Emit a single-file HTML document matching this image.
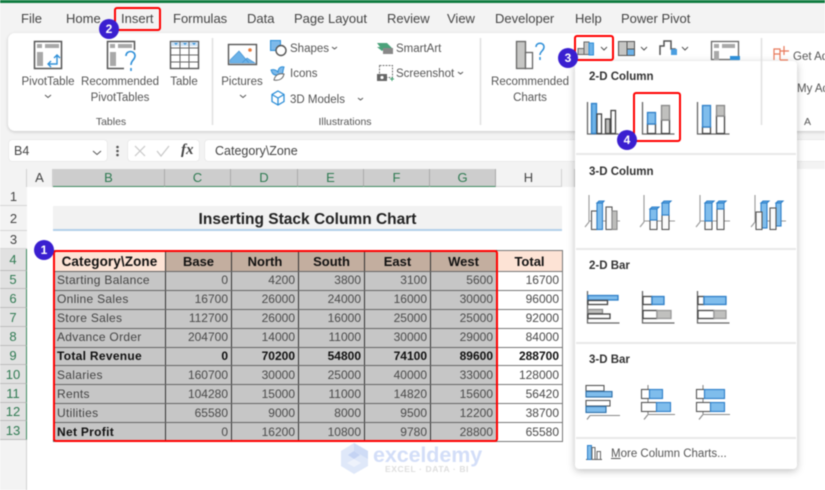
<!DOCTYPE html>
<html><head><meta charset="utf-8"><style>
*{box-sizing:border-box}
html,body{margin:0;padding:0;background:#fff}
#p{position:relative;width:825px;height:490px;overflow:hidden;background:#fff;font-family:"Liberation Sans",sans-serif;filter:blur(.4px)}
.a{position:absolute;white-space:nowrap}
.t{position:absolute;white-space:nowrap;font-size:12.5px;color:#444;line-height:14px}
.r{position:absolute;white-space:nowrap;font-size:11.5px;color:#555;line-height:14px}
.c{text-align:center;transform:translateX(-50%)}
.rh{position:absolute;left:0;width:27px;text-align:center;font-size:13px;color:#444;background:#f3f3f3;border-bottom:1px solid #d6d6d6;display:flex;align-items:center;justify-content:center}
.rh.s{background:#e1e1e1;color:#2f7a52;border-right:1.5px solid #3f8a60;border-bottom-color:#bdbdbd}
.ch{position:absolute;top:169px;height:18px;text-align:center;font-size:13px;line-height:18px;color:#444;background:#f3f3f3;border-right:1px solid #d0d0d0}
.ch.s{background:#cdcdcd;color:#2f7a52;border-bottom:1.5px solid #3f8a60;border-right-color:#aaa}
table{position:absolute;left:53px;top:250px;border-collapse:collapse;table-layout:fixed;width:509px;font-size:12px;color:#444}
td{padding:0 3px;height:18.9px;line-height:17px;text-align:right;background:#c6c6c6;border:1px solid #333;border-top-color:#666;border-bottom-color:#666;white-space:nowrap;overflow:hidden;color:#4a4a4a}
td.l{text-align:left;padding-left:3px;color:#444;letter-spacing:.3px}
tr.b td{font-weight:bold;color:#111}
tr.h td{height:21px;font-weight:bold;font-size:13px;text-align:center;background:#c3ae9f;color:#111}
tr.h td.p{background:#fde3d5}
tr.h td.k{font-size:13.5px;letter-spacing:.1px;padding:0}
td.w{background:#fff;border-color:#777}
.badge{position:absolute;width:20px;height:20px;border-radius:50%;background:#3a1fd0;color:#fff;font-size:12px;font-weight:bold;text-align:center;line-height:20px}
.red{position:absolute;border:2px solid #f00;border-radius:3px}
.dh{position:absolute;left:589px;font-size:11.5px;font-weight:bold;color:#333;line-height:14px;white-space:nowrap}
.dv{position:absolute;left:576px;width:220px;height:2px;background:#e8e8e8}
</style></head><body><div id="p">
<div class="a" style="left:0;top:0;width:825px;height:170px;background:#f3f3f3"></div>
<div class="a" style="left:0;top:0;width:825px;height:3px;background:#107c41"></div>

<div class="t" style="left:21px;top:12px;font-size:13px">File</div>
<div class="t" style="left:66px;top:12px;font-size:13px">Home</div>
<div class="t" style="left:121px;top:12px;font-size:13px">Insert</div>
<div class="t" style="left:173px;top:12px;font-size:13px">Formulas</div>
<div class="t" style="left:247px;top:12px;font-size:13px">Data</div>
<div class="t" style="left:294px;top:12px;font-size:13px">Page Layout</div>
<div class="t" style="left:387px;top:12px;font-size:13px">Review</div>
<div class="t" style="left:447px;top:12px;font-size:13px">View</div>
<div class="t" style="left:495px;top:12px;font-size:13px">Developer</div>
<div class="t" style="left:575px;top:12px;font-size:13px">Help</div>
<div class="t" style="left:621px;top:12px;font-size:13px">Power Pivot</div>

<div class="a" style="left:8px;top:33px;width:830px;height:98px;background:#fff;border-radius:7px;box-shadow:0 1px 3px rgba(0,0,0,.18)"></div>

<div class="r c" style="left:48px;top:75px">PivotTable</div>
<div class="r c" style="left:120px;top:75px">Recommended</div>
<div class="r c" style="left:120px;top:91px">PivotTables</div>
<div class="r c" style="left:184px;top:75px">Table</div>
<div class="r c" style="left:111px;top:115px;font-size:10.5px">Tables</div>
<div class="r c" style="left:242px;top:75px">Pictures</div>
<div class="r" style="left:290px;top:42px">Shapes</div>
<div class="r" style="left:290px;top:67px">Icons</div>
<div class="r" style="left:290px;top:93px">3D Models</div>
<div class="r" style="left:396px;top:42px">SmartArt</div>
<div class="r" style="left:396px;top:67px">Screenshot</div>
<div class="r c" style="left:345px;top:115px;font-size:10.5px">Illustrations</div>
<div class="r c" style="left:530px;top:75px">Recommended</div>
<div class="r c" style="left:530px;top:91px">Charts</div>
<div class="r" style="left:793px;top:50px">Get Add-ins</div>
<div class="r" style="left:797px;top:82px">My Add-ins</div>
<div class="r" style="left:804px;top:115px;font-size:10.5px">A</div>

<!-- formula bar -->
<div class="a" style="left:9px;top:140px;width:98px;height:21px;background:#fff;border-radius:3px;box-shadow:0 0 1px #bbb"></div>
<div class="t" style="left:14px;top:144px;font-size:12.5px">B4</div>
<div class="a" style="left:128px;top:140px;width:71px;height:21px;background:#fff;border-radius:3px;box-shadow:0 0 1px #bbb"></div>
<div class="a" style="left:181px;top:142px;font:italic bold 15px 'Liberation Serif',serif;color:#444">fx</div>
<div class="a" style="left:205px;top:140px;width:620px;height:21px;background:#fff;border-radius:3px 0 0 3px;box-shadow:0 0 1px #bbb"></div>
<div class="t" style="left:215px;top:144px;font-size:12.5px">Category\Zone</div>

<!-- sheet headers -->
<div class="a" style="left:0;top:165px;width:825px;height:325px;background:#fff"></div>
<div class="a" style="left:0;top:162px;width:825px;height:7px;background:#f3f3f3"></div>
<div class="a" style="left:0;top:169px;width:27px;height:18px;background:#f3f3f3;border-right:1px solid #d0d0d0"></div>
<div class="ch" style="left:27px;width:26px">A</div>
<div class="ch s" style="left:53px;width:112px">B</div>
<div class="ch s" style="left:165px;width:66px">C</div>
<div class="ch s" style="left:231px;width:67px">D</div>
<div class="ch s" style="left:298px;width:66px">E</div>
<div class="ch s" style="left:364px;width:66px">F</div>
<div class="ch s" style="left:430px;width:66px">G</div>
<div class="ch" style="left:496px;width:66px;border-bottom:1px solid #d6d6d6">H</div>
<div class="ch" style="left:562px;width:13px"></div>
<div class="a" style="left:0;top:187px;width:27px;height:303px;background:#f3f3f3;border-right:1px solid #d0d0d0"></div>

<div class="rh" style="top:187px;height:19px">1</div>
<div class="rh" style="top:206px;height:25px">2</div>
<div class="rh" style="top:231px;height:18px">3</div>
<div class="rh s" style="top:249px;height:22px">4</div>
<div class="rh s" style="top:271px;height:18px">5</div>
<div class="rh s" style="top:289px;height:19px">6</div>
<div class="rh s" style="top:308px;height:19px">7</div>
<div class="rh s" style="top:327px;height:19px">8</div>
<div class="rh s" style="top:346px;height:19px">9</div>
<div class="rh s" style="top:365px;height:19px">10</div>
<div class="rh s" style="top:384px;height:19px">11</div>
<div class="rh s" style="top:403px;height:18px">12</div>
<div class="rh s" style="top:421px;height:19px">13</div>

<div class="a" style="left:53px;top:206px;width:509px;height:25px;background:#f2f2f2;border-bottom:2px solid #b3d0ea;text-align:center;font-weight:bold;font-size:15.5px;line-height:27px;color:#222">Inserting Stack Column Chart</div>

<table>
<colgroup><col style="width:112px"><col style="width:66px"><col style="width:67px"><col style="width:66px"><col style="width:66px"><col style="width:66px"><col style="width:66px"></colgroup>
<tr class="h"><td class="p k">Category\Zone</td><td>Base</td><td>North</td><td>South</td><td>East</td><td>West</td><td class="p" style="border-color:#777">Total</td></tr>
<tr><td class="l">Starting Balance</td><td>0</td><td>4200</td><td>3800</td><td>3100</td><td>5600</td><td class="w">16700</td></tr>
<tr><td class="l">Online Sales</td><td>16700</td><td>26000</td><td>24000</td><td>16000</td><td>30000</td><td class="w">96000</td></tr>
<tr><td class="l">Store Sales</td><td>112700</td><td>26000</td><td>16000</td><td>25000</td><td>25000</td><td class="w">92000</td></tr>
<tr><td class="l">Advance Order</td><td>204700</td><td>14000</td><td>11000</td><td>30000</td><td>29000</td><td class="w">84000</td></tr>
<tr class="b"><td class="l">Total Revenue</td><td>0</td><td>70200</td><td>54800</td><td>74100</td><td>89600</td><td class="w">288700</td></tr>
<tr><td class="l">Salaries</td><td>160700</td><td>30000</td><td>25000</td><td>40000</td><td>33000</td><td class="w">128000</td></tr>
<tr><td class="l">Rents</td><td>104280</td><td>15000</td><td>11000</td><td>14820</td><td>15600</td><td class="w">56420</td></tr>
<tr><td class="l">Utilities</td><td>65580</td><td>9000</td><td>8000</td><td>9500</td><td>12200</td><td class="w">38700</td></tr>
<tr class="b"><td class="l">Net Profit</td><td style="font-weight:normal;color:#4a4a4a">0</td><td style="font-weight:normal;color:#4a4a4a">16200</td><td style="font-weight:normal;color:#4a4a4a">10800</td><td style="font-weight:normal;color:#4a4a4a">9780</td><td style="font-weight:normal;color:#4a4a4a">28800</td><td class="w" style="font-weight:normal;color:#4a4a4a">65580</td></tr>
</table>

<div class="red" style="left:53px;top:250px;width:445px;height:192px"></div>

<!-- watermark -->
<svg class="a" style="left:340px;top:442px" width="30" height="32" viewBox="0 0 30 32"><path d="M14 1 28 9v15l-14 8L1 24V9z" fill="#dfe8f9"/><path d="M14 1 28 9v8l-14-8z" fill="#cfdcf6"/><path d="M14 17l7 4-7 4-7-4z" fill="#eef2fb"/><path d="M8 13l6-4 6 4-6 4z" fill="#c4d3f3"/></svg>
<div class="a" style="left:373px;top:442px;font-size:21.5px;font-weight:bold;color:#d3def8;line-height:26px;letter-spacing:-.1px">exceldemy</div>
<div class="a" style="left:385px;top:464px;font-size:8.5px;font-weight:bold;color:#dedede;letter-spacing:.6px;line-height:10px">EXCEL · DATA · BI</div>

<!-- dropdown -->
<div class="a" style="left:575px;top:61px;width:222px;height:408px;background:#fff;border-radius:4px;box-shadow:0 2px 8px rgba(0,0,0,.25)"></div>
<div class="dh" style="top:70px">2-D Column</div>
<div class="dh" style="top:165px">3-D Column</div>
<div class="dh" style="top:259px">2-D Bar</div>
<div class="dh" style="top:353px">3-D Bar</div>
<div class="dv" style="top:153px"></div>
<div class="dv" style="top:248px"></div>
<div class="dv" style="top:342px"></div>
<div class="dv" style="top:437px"></div>
<div class="a" style="left:611px;top:447px;font-size:11.5px;color:#555;line-height:14px"><u>M</u>ore Column Charts...</div>

<!-- all icons -->
<svg class="a" style="left:0;top:0" width="825" height="490" viewBox="0 0 825 490" fill="none">
<g stroke="#e0e0e0"><path d="M212.5 38v87M480.5 38v87M761.5 38v87" stroke-width="1.5"/></g>
<!-- PivotTable -->
<rect x="34.5" y="41.5" width="27" height="27" fill="#fff" stroke="#555" stroke-width="1.5"/>
<path d="M37 44h5v4h-5zM45 44h14v4H45z" fill="#a8a8a8"/><rect x="37" y="52" width="6" height="14" fill="#a8a8a8"/>
<path d="M48 64h9v-9M54 58l3-3 3 3M51 61l-3 3 3 3" stroke="#2e8fd8" stroke-width="1.4"/>
<!-- Recommended Pivot -->
<rect x="107.5" y="41.5" width="27" height="27" fill="#fff" stroke="#555" stroke-width="1.5"/>
<path d="M110 44h5v4h-5zM118 44h14v4h-14zM110 52h6v14h-6z" fill="#a8a8a8"/>
<rect x="124" y="50" width="16" height="21" fill="#fff"/>
<path d="M126 56c0-6 9-6 9 0 0 4-4 4-4 9M131 68v3" stroke="#2e8fd8" stroke-width="1.6"/>
<!-- Table -->
<rect x="170.5" y="41.5" width="28" height="27" fill="#fff" stroke="#555" stroke-width="1.4"/>
<rect x="171" y="42" width="27" height="4" fill="#cfe3f5"/>
<path d="M171 48h27M171 55h27M171 62h27M180 42v26M189 42v26" stroke="#666"/>
<path d="M174 43h4l-2 2zM183 43h4l-2 2zM192 43h4l-2 2z" fill="#2e8fd8"/>
<!-- Pictures -->
<rect x="228.5" y="44.5" width="28" height="20" fill="#fff" stroke="#555" stroke-width="1.4"/>
<path d="M230 63V60l9-9 10 12zM242 63l5-5 8 5z" fill="#6cb2e8" stroke="#3f8fd0" stroke-width=".6"/>
<circle cx="250" cy="50" r="1.8" fill="#e8793a"/>
<!-- Shapes -->
<rect x="270.5" y="40.5" width="10" height="10" fill="#7db9ea" stroke="#2e8fd8"/>
<circle cx="281" cy="50.5" r="5" fill="#fff" stroke="#555" stroke-width="1.4"/>
<!-- Icons -->
<path d="M271 70c3-1 5 0 7 2 0-4 3-6 6-5l-1 4c0 4-4 5-7 4-3 0-4-2-5-5z" fill="#7db9ea" stroke="#2e8fd8"/>
<path d="M274 80c1-5 5-7 10-6-1 5-5 7-10 6z" fill="#fff" stroke="#666"/>
<!-- 3D -->
<path d="M278 91l6 3.5v7l-6 3.5-6-3.500v-7zM272 94.500l6 3.500 6-3.500M278 98v7" stroke="#2e8fd8" stroke-width="1.300"/>
<!-- SmartArt -->
<path d="M377 43h10l5 5h-7l-3 3-5-4h3z" fill="#4ba27a"/><rect x="383" y="48" width="10" height="6" fill="#888"/>
<!-- Screenshot -->
<rect x="379.500" y="65.500" width="13" height="12" stroke="#777" stroke-dasharray="2 1"/><rect x="377" y="74" width="10" height="7" fill="#666"/><circle cx="382" cy="77.500" r="1.600" fill="#fff"/>
<path d="M390 79h4M392 77v4" stroke="#3a9e6c"/>
<!-- carets -->
<g stroke="#555" stroke-width="1"><path d="M45 95l3 2.500 3-2.500M240 95l3 2.500 3-2.500M332 47l2.500 2 2.500-2M358 98l2.500 2 2.500-2M458 72l2.500 2 2.500-2M93 151l4 3.500 4-3.500"/>
<path d="M601 47l3 3 3-3M641 47l3 3 3-3M682 47l3 3 3-3"/></g>
<circle cx="117.500" cy="147" r="1.300" fill="#555"/><circle cx="117.500" cy="151" r="1.300" fill="#555"/><circle cx="117.500" cy="155" r="1.300" fill="#555"/>
<path d="M135 146l10 10M145 146l-10 10M157 151l4 5 8-10" stroke="#c8c8c8" stroke-width="1.200"/>
<!-- Rec charts -->
<rect x="516.500" y="41.500" width="9" height="27" fill="#c6c6c4" stroke="#666" stroke-width="1.300"/><rect x="525.500" y="52.500" width="7" height="16" fill="#fff" stroke="#666" stroke-width="1.300"/>
<path d="M536 47c0-5 8-5 8 0 0 4-4 4-4 8M540 57v3" stroke="#2e8fd8" stroke-width="1.500"/>
<!-- column top right -->
<path d="M578 54.500h6v-6h-6zM584 54.500V42h5v12.500z" fill="#c6c6c4" stroke="#666"/><rect x="589" y="43" width="4.500" height="12" fill="#6cb2e8" stroke="#2e8fd8"/>
<rect x="618.500" y="41.500" width="16" height="14" fill="#c6c6c4" stroke="#555"/><rect x="627" y="49" width="7" height="6" fill="#6cb2e8"/><path d="M627 42v14M627 49h7" stroke="#555"/>
<path d="M660 55v-9h4v-5h7v8h4v6" stroke="#555" stroke-width="1.500"/><rect x="671" y="49" width="6" height="6" fill="#4a9ee0"/>
<rect x="711.500" y="41.500" width="27" height="18" fill="#fff" stroke="#666" stroke-width="1.300"/><path d="M714 44h5v4h-5zM722 44h13v4h-13zM714 51h5v9h-5z" fill="#a8a8a8"/><rect x="730" y="56" width="10" height="4" fill="#2e8fd8"/>
<path d="M774 49h6v5h-6zM774 54v6M780 49v11M784 46v9M780 51h9M788 60h-8" stroke="#e8795a" stroke-width="1.200"/>

<!-- 2D column -->
<g stroke="#444" stroke-width="1.300">
<path d="M587.500 102v32h31" stroke="#666"/>
<rect x="591.500" y="103.500" width="5" height="30" fill="#6cb2e8" stroke="#2e7fc8"/><rect x="597" y="114" width="4.500" height="19.500" fill="#fff"/><rect x="605.500" y="119" width="4.500" height="14.500" fill="#c0c0be"/><rect x="611" y="110.500" width="4.500" height="23" fill="#fff"/>
<path d="M642.500 102v32h32" stroke="#666"/>
<rect x="647.500" y="124" width="8" height="9.500" fill="#fff"/><rect x="647.500" y="112.500" width="8" height="11.500" fill="#7fbdec" stroke="#2e7fc8"/><rect x="661.500" y="120" width="8" height="13.500" fill="#fff"/><rect x="661.500" y="105.500" width="8" height="14.500" fill="#c0c0be" stroke="#888"/>
<path d="M697.500 102v32h32" stroke="#666"/>
<rect x="702.500" y="127" width="8" height="6.500" fill="#fff"/><rect x="702.500" y="105.500" width="8" height="21.500" fill="#7fbdec" stroke="#2e7fc8"/><rect x="716.500" y="116" width="8" height="17.500" fill="#fff"/><rect x="716.500" y="105.500" width="8" height="10.500" fill="#c0c0be" stroke="#888"/>
</g>
<!-- 3D column -->
<g stroke="#555" stroke-width="1.100">
<path d="M589 195v27l-4 5M589 221h31M644 195v27l-4 5M644 221h31M700 195v27l-4 5M700 221h30M755 195v27l-4 5M755 221h31" stroke="#999"/>
<rect x="591.500" y="211" width="5.500" height="18.500" fill="#fafafa"/>
<path d="M597 203l2-2h5l-1.500 2z" fill="#5ca6e4" stroke="#2e7fc8"/><rect x="597" y="203" width="5.500" height="26.500" fill="#7fbdec" stroke="#2e7fc8"/>
<rect x="606" y="207" width="6" height="22.500" fill="#fafafa"/>
<rect x="612" y="211" width="5" height="18.500" fill="#bdbdbb" stroke="#888"/>
<rect x="650" y="220" width="7" height="9.500" fill="#fafafa"/>
<path d="M650 209l2-2h7l-2 2z" fill="#5ca6e4" stroke="#2e7fc8"/><rect x="650" y="209" width="7" height="11" fill="#7fbdec" stroke="#2e7fc8"/>
<rect x="662" y="215" width="7" height="14.500" fill="#fafafa"/>
<path d="M662 203l2-2h7l-2 2z" fill="#5ca6e4" stroke="#2e7fc8"/><rect x="662" y="203" width="7" height="12" fill="#7fbdec" stroke="#2e7fc8"/>
<rect x="705" y="221" width="7" height="8.500" fill="#fafafa"/>
<path d="M705 203l2-2h7l-2 2z" fill="#5ca6e4" stroke="#2e7fc8"/><rect x="705" y="203" width="7" height="18" fill="#7fbdec" stroke="#2e7fc8"/>
<rect x="717" y="209" width="7" height="20.500" fill="#fafafa"/>
<path d="M717 203l2-2h7l-2 2z" fill="#5ca6e4" stroke="#2e7fc8"/><rect x="717" y="203" width="7" height="6" fill="#7fbdec" stroke="#2e7fc8"/>
<path d="M761 203l2-2h6l-2 2z" fill="#5ca6e4" stroke="#2e7fc8"/><rect x="761" y="203" width="6" height="25" fill="#7fbdec" stroke="#2e7fc8"/>
<path d="M776 203l2-2h5l-2 2z" fill="#5ca6e4" stroke="#2e7fc8"/><rect x="776" y="203" width="5" height="23" fill="#7fbdec" stroke="#2e7fc8"/>
<rect x="756" y="212" width="6" height="17.500" fill="#fafafa"/>
<rect x="770" y="208" width="6" height="21.500" fill="#fafafa"/>
</g>
<!-- 2D bar -->
<g stroke="#444" stroke-width="1.300">
<path d="M587.500 291v32h32" stroke="#666"/>
<rect x="588" y="295.500" width="30" height="4.500" fill="#7fbdec" stroke="#2e7fc8"/><rect x="588" y="300.500" width="19.500" height="4" fill="#fff"/><rect x="588" y="309.500" width="14.500" height="4" fill="#c0c0be" stroke="#888"/><rect x="588" y="314" width="22" height="4.500" fill="#fff"/>
<path d="M642.500 291v32h32" stroke="#666"/>
<rect x="643" y="296.500" width="9" height="8" fill="#fff"/><rect x="652" y="296.500" width="12" height="8" fill="#7fbdec" stroke="#2e7fc8"/><rect x="643" y="310.500" width="14" height="8" fill="#fff"/><rect x="657" y="310.500" width="14" height="8" fill="#c0c0be" stroke="#999"/>
<path d="M697.500 291v32h32" stroke="#666"/>
<rect x="698" y="296.500" width="6" height="8" fill="#fff"/><rect x="704" y="296.500" width="22" height="8" fill="#7fbdec" stroke="#2e7fc8"/><rect x="698" y="310.500" width="16" height="8" fill="#fff"/><rect x="714" y="310.500" width="12" height="8" fill="#c0c0be" stroke="#999"/>
</g>
<!-- 3D bar -->
<g stroke="#555" stroke-width="1.100">
<path d="M590 415.500h30M590 415.500l-3 4" stroke="#888"/>
<rect x="586" y="385.500" width="18" height="5.500" fill="#fff"/><rect x="586" y="391.500" width="26" height="5.500" fill="#7fbdec" stroke="#2e6fa8"/><rect x="586" y="400.500" width="24" height="5.500" fill="#fff"/><rect x="586" y="406.500" width="20" height="6" fill="#7fbdec" stroke="#2e6fa8"/>
<path d="M648 385v29M648 414.500h27M648 414.500l-4 5" stroke="#888"/>
<rect x="641.500" y="389.500" width="8" height="9" fill="#fff"/><rect x="649.500" y="389.500" width="13" height="9" fill="#7fbdec" stroke="#2e7fc8"/>
<rect x="641.500" y="402.500" width="15" height="9" fill="#fff"/><rect x="656.500" y="402.500" width="14" height="9" fill="#7fbdec" stroke="#2e7fc8"/>
<path d="M703 385v29M703 414.500h27M703 414.500l-4 5" stroke="#888"/>
<rect x="696.500" y="389.500" width="8" height="9" fill="#fff"/><rect x="704.500" y="389.500" width="20" height="9" fill="#7fbdec" stroke="#2e7fc8"/>
<rect x="696.500" y="402.500" width="14" height="9" fill="#fff"/><rect x="710.500" y="402.500" width="14" height="9" fill="#7fbdec" stroke="#2e7fc8"/>
</g>
<!-- more -->
<path d="M586 459.500h16" stroke="#555"/><rect x="587.500" y="445.500" width="4" height="14" fill="#7fbdec" stroke="#2e7fc8"/><rect x="592" y="447.500" width="3" height="12" fill="#fff" stroke="#666"/><rect x="597" y="451.500" width="3.500" height="8" fill="#fff" stroke="#666"/>
</svg>

<!-- annotations -->
<div class="red" style="left:114px;top:7px;width:47px;height:24px"></div>
<div class="red" style="left:574px;top:35px;width:40px;height:26px"></div>
<div class="red" style="left:633px;top:92px;width:48px;height:50px"></div>
<div class="badge" style="left:34px;top:240px">1</div>
<div class="badge" style="left:99px;top:19px">2</div>
<div class="badge" style="left:558px;top:48px">3</div>
<div class="badge" style="left:617px;top:130px">4</div>
</div></body></html>
